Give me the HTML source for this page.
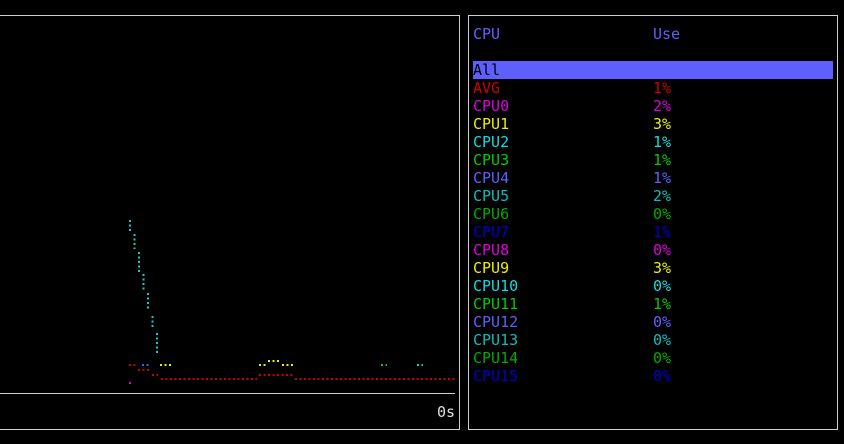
<!DOCTYPE html>
<html><head><meta charset="utf-8"><style>
html,body{margin:0;padding:0;background:#000;width:844px;height:444px;overflow:hidden}
body{position:relative;font-family:"DejaVu Sans Mono","Liberation Mono",monospace;font-size:15px}
.box{position:absolute;border:1px solid #d0d0d0}
.t{position:absolute;white-space:pre;line-height:18px}
</style></head><body>
<div class="box" style="left:-2px;top:15px;width:460px;height:413px"></div>
<div class="box" style="left:468px;top:15px;width:368px;height:413px"></div>
<svg style="position:absolute;left:0;top:0" width="844" height="444">
<line x1="0" y1="393.5" x2="455" y2="393.5" stroke="#d0d0d0" stroke-width="1"/>
<g stroke="#11cccc" stroke-width="2" stroke-dasharray="2 2.5">
<line x1="130" y1="220" x2="130" y2="232"/>
<line x1="134.5" y1="234" x2="134.5" y2="249"/>
<line x1="139" y1="252" x2="139" y2="272"/>
<line x1="143.5" y1="274" x2="143.5" y2="290"/>
<line x1="148" y1="293" x2="148" y2="311"/>
<line x1="152.5" y1="316" x2="152.5" y2="329"/>
<line x1="157" y1="333" x2="157" y2="353"/>
<line x1="417" y1="365" x2="423" y2="365"/>
</g>
<g stroke="#cc0000" stroke-width="2" stroke-dasharray="2 2.5">
<line x1="129" y1="365" x2="136" y2="365"/>
<line x1="138" y1="370" x2="149" y2="370"/>
<line x1="152" y1="375" x2="158" y2="375"/>
<line x1="161" y1="379" x2="257" y2="379"/>
<line x1="259" y1="375" x2="293" y2="375"/>
<line x1="295" y1="379" x2="456" y2="379"/>
</g>
<g stroke="#eeee00" stroke-width="2" stroke-dasharray="2 2.5">
<line x1="160" y1="365" x2="171" y2="365"/>
<line x1="259" y1="365" x2="266" y2="365"/>
<line x1="268" y1="361" x2="279" y2="361"/>
<line x1="282" y1="365" x2="293" y2="365"/>
</g>
<g stroke="#5555ee" stroke-width="2" stroke-dasharray="2 2.5"><line x1="142" y1="365" x2="149" y2="365"/></g>
<g stroke="#00cc00" stroke-width="2" stroke-dasharray="2 2.5"><line x1="381" y1="365" x2="387" y2="365"/></g>
<rect x="129" y="382" width="2" height="2" fill="#dd00dd"/>
</svg>
<div class="t" style="left:437px;top:403px;color:#e0e0e0">0s</div>
<div style="position:absolute;left:473px;top:61px;width:360px;height:18px;background:#5f5fff"></div>
<div class="t" style="left:473px;top:25px;color:#6060ff">CPU</div>
<div class="t" style="left:653px;top:25px;color:#6060ff">Use</div>
<div class="t" style="left:473px;top:61px;color:#000">All</div>
<div class="t" style="left:473px;top:79px"><span style="color:#cc0000">AVG</span>
<span style="color:#dd00dd">CPU0</span>
<span style="color:#eeee00">CPU1</span>
<span style="color:#11dddd">CPU2</span>
<span style="color:#00cc00">CPU3</span>
<span style="color:#5f5fff">CPU4</span>
<span style="color:#11bbbb">CPU5</span>
<span style="color:#00aa00">CPU6</span>
<span style="color:#0000cc">CPU7</span>
<span style="color:#dd00dd">CPU8</span>
<span style="color:#eeee00">CPU9</span>
<span style="color:#11dddd">CPU10</span>
<span style="color:#00cc00">CPU11</span>
<span style="color:#5f5fff">CPU12</span>
<span style="color:#11bbbb">CPU13</span>
<span style="color:#00aa00">CPU14</span>
<span style="color:#0000cc">CPU15</span></div>
<div class="t" style="left:653px;top:79px"><span style="color:#cc0000">1%</span>
<span style="color:#dd00dd">2%</span>
<span style="color:#eeee00">3%</span>
<span style="color:#11dddd">1%</span>
<span style="color:#00cc00">1%</span>
<span style="color:#5f5fff">1%</span>
<span style="color:#11bbbb">2%</span>
<span style="color:#00aa00">0%</span>
<span style="color:#0000cc">1%</span>
<span style="color:#dd00dd">0%</span>
<span style="color:#eeee00">3%</span>
<span style="color:#11dddd">0%</span>
<span style="color:#00cc00">1%</span>
<span style="color:#5f5fff">0%</span>
<span style="color:#11bbbb">0%</span>
<span style="color:#00aa00">0%</span>
<span style="color:#0000cc">0%</span></div>
</body></html>
